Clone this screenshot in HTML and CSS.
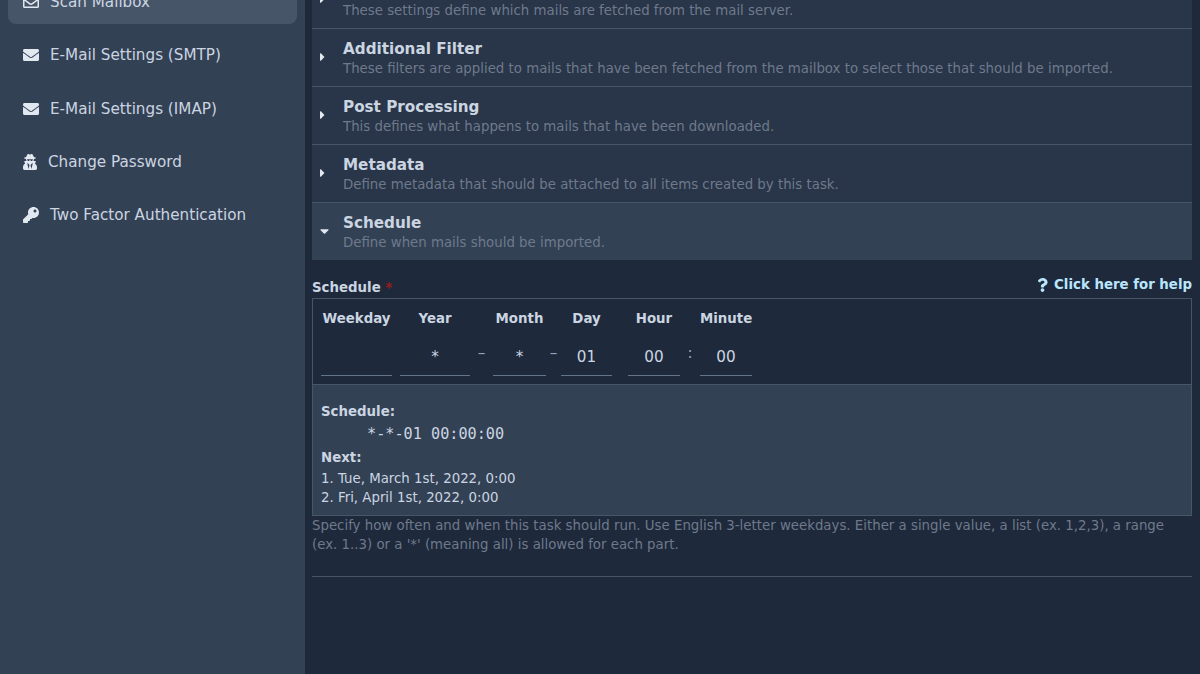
FILE: index.html
```html
<!DOCTYPE html>
<html lang="en">

<head>
    <meta charset="UTF-8">
    <meta name="viewport" content="width=device-width, initial-scale=1.0">
    <title>Scan Mailbox</title>
    <link rel="stylesheet" href="styles.css">
</head>

<body>
    <div class="page">
        <aside class="sidebar">
            <a class="nav-item active">
                <svg class="nav-icon" viewBox="0 0 512 512"><path d="M464 64H48C21.49 64 0 85.49 0 112v288c0 26.51 21.49 48 48 48h416c26.51 0 48-21.49 48-48V112c0-26.51-21.49-48-48-48zm0 48v40.805c-22.422 18.259-58.168 46.651-134.587 106.49-16.841 13.247-50.201 45.072-73.413 44.701-23.208.375-56.579-31.459-73.413-44.701C106.18 199.465 70.425 171.067 48 152.805V112h416zM48 400V214.398c22.914 18.251 55.409 43.862 104.938 82.646 21.857 17.205 60.134 55.186 103.062 54.955 42.717.231 80.509-37.199 103.053-54.947 49.528-38.783 82.032-64.401 104.947-82.653V400H48z"/></svg>
                <span>Scan Mailbox</span>
            </a>
            <a class="nav-item">
                <svg class="nav-icon" viewBox="0 0 512 512"><path d="M502.3 190.8c3.9-3.1 9.7-.2 9.7 4.7V400c0 26.5-21.5 48-48 48H48c-26.5 0-48-21.5-48-48V195.6c0-5 5.7-7.8 9.7-4.7 22.4 17.4 52.1 39.5 154.1 113.6 21.1 15.4 56.7 47.8 92.2 47.6 35.7.3 72-32.8 92.3-47.6 102-74.1 131.6-96.3 154-113.7zM256 320c23.2.4 56.6-29.2 73.4-41.4 132.7-96.3 142.8-104.7 173.4-128.7 5.8-4.5 9.2-11.5 9.2-18.9v-19c0-26.5-21.5-48-48-48H48C21.5 64 0 85.5 0 112v19c0 7.4 3.4 14.3 9.2 18.9 30.6 23.9 40.7 32.4 173.4 128.7 16.8 12.2 50.2 41.8 73.4 41.4z"/></svg>
                <span>E-Mail Settings (SMTP)</span>
            </a>
            <a class="nav-item">
                <svg class="nav-icon" viewBox="0 0 512 512"><path d="M502.3 190.8c3.9-3.1 9.7-.2 9.7 4.7V400c0 26.5-21.5 48-48 48H48c-26.5 0-48-21.5-48-48V195.6c0-5 5.7-7.8 9.7-4.7 22.4 17.4 52.1 39.5 154.1 113.6 21.1 15.4 56.7 47.8 92.2 47.6 35.7.3 72-32.8 92.3-47.6 102-74.1 131.6-96.3 154-113.7zM256 320c23.2.4 56.6-29.2 73.4-41.4 132.7-96.3 142.8-104.7 173.4-128.7 5.8-4.5 9.2-11.5 9.2-18.9v-19c0-26.5-21.5-48-48-48H48C21.5 64 0 85.5 0 112v19c0 7.4 3.4 14.3 9.2 18.9 30.6 23.9 40.7 32.4 173.4 128.7 16.8 12.2 50.2 41.8 73.4 41.4z"/></svg>
                <span>E-Mail Settings (IMAP)</span>
            </a>
            <a class="nav-item">
                <svg class="nav-icon narrow" viewBox="0 0 448 512"><path d="M383.9 308.3l23.9-62.6c4-10.5-3.7-21.7-15-21.7h-58.5c11-18.9 17.8-40.6 17.8-64v-.3c39.2-7.8 64-19.1 64-31.7 0-13.3-27.3-25.1-70.1-33-9.2-32.8-27-65.8-40.6-82.8-9.5-11.9-25.9-15.6-39.5-8.8l-27.6 13.8c-9 4.5-19.6 4.5-28.6 0L182.1 3.4c-13.6-6.8-30-3.1-39.5 8.8-13.5 17-31.4 50-40.6 82.8-42.7 7.9-70 19.7-70 33 0 12.6 24.8 23.9 64 31.7v.3c0 23.4 6.8 45.1 17.8 64H56.3c-11.5 0-19.2 11.7-14.7 22.3l25.8 60.2C27.3 329.8 0 372.7 0 422.4v44.8C0 491.9 20.1 512 44.8 512h358.4c24.7 0 44.8-20.1 44.8-44.8v-44.8c0-48.4-25.8-90.4-64.1-114.1zM176 480l-41.6-192 49.6 32 24 40-32 120zm96 0l-32-120 24-40 49.6-32L272 480zm41.7-298.5c-3.9 11.9-7 24.6-16.5 33.4-10.1 9.3-48 22.4-64-25-2.8-8.4-15.4-8.4-18.3 0-17 50.2-56 32.4-64 25-9.5-8.8-12.7-21.5-16.5-33.4-.8-2.5-6.3-5.7-6.3-5.8v-10.8c28.3 3.6 61 5.8 96 5.8s67.7-2.1 96-5.8v10.8c-.1.1-5.6 3.2-6.4 5.8z"/></svg>
                <span>Change Password</span>
            </a>
            <a class="nav-item">
                <svg class="nav-icon" viewBox="0 0 512 512"><path d="M512 176.001C512 273.203 433.202 352 336 352c-11.22 0-22.19-1.062-32.827-3.069l-24.012 27.014A23.999 23.999 0 0 1 261.223 384H224v40c0 13.255-10.745 24-24 24h-40v40c0 13.255-10.745 24-24 24H24c-13.255 0-24-10.745-24-24v-78.059c0-6.365 2.529-12.47 7.029-16.971l161.802-161.802C163.108 213.814 160 195.271 160 176 160 78.798 238.797.001 335.999 0 433.488-.001 512 78.511 512 176.001zM336 128c0 26.51 21.49 48 48 48s48-21.49 48-48-21.49-48-48-48-48 21.49-48 48z"/></svg>
                <span>Two Factor Authentication</span>
            </a>
        </aside>

        <main class="content">
            <div class="section">
                <svg class="caret" viewBox="0 0 192 512"><path d="M0 384.662V127.338c0-17.818 21.543-26.741 34.142-14.142l128.662 128.662c7.81 7.81 7.81 20.474 0 28.284L34.142 398.804C21.543 411.404 0 402.48 0 384.662z"/></svg>
                <div class="section-text">
                    <h3>Mailbox</h3>
                    <p>These settings define which mails are fetched from the mail server.</p>
                </div>
            </div>
            <div class="section">
                <svg class="caret" viewBox="0 0 192 512"><path d="M0 384.662V127.338c0-17.818 21.543-26.741 34.142-14.142l128.662 128.662c7.81 7.81 7.81 20.474 0 28.284L34.142 398.804C21.543 411.404 0 402.48 0 384.662z"/></svg>
                <div class="section-text">
                    <h3>Additional Filter</h3>
                    <p>These filters are applied to mails that have been fetched from the mailbox to select those that should be imported.</p>
                </div>
            </div>
            <div class="section">
                <svg class="caret" viewBox="0 0 192 512"><path d="M0 384.662V127.338c0-17.818 21.543-26.741 34.142-14.142l128.662 128.662c7.81 7.81 7.81 20.474 0 28.284L34.142 398.804C21.543 411.404 0 402.48 0 384.662z"/></svg>
                <div class="section-text">
                    <h3>Post Processing</h3>
                    <p>This defines what happens to mails that have been downloaded.</p>
                </div>
            </div>
            <div class="section">
                <svg class="caret" viewBox="0 0 192 512"><path d="M0 384.662V127.338c0-17.818 21.543-26.741 34.142-14.142l128.662 128.662c7.81 7.81 7.81 20.474 0 28.284L34.142 398.804C21.543 411.404 0 402.48 0 384.662z"/></svg>
                <div class="section-text">
                    <h3>Metadata</h3>
                    <p>Define metadata that should be attached to all items created by this task.</p>
                </div>
            </div>
            <div class="section open">
                <svg class="caret down" viewBox="0 0 320 512"><path d="M31.3 192h257.3c17.8 0 26.7 21.5 14.1 34.1L174.1 354.8c-7.8 7.8-20.5 7.8-28.3 0L17.2 226.1C4.6 213.5 13.5 192 31.3 192z"/></svg>
                <div class="section-text">
                    <h3>Schedule</h3>
                    <p>Define when mails should be imported.</p>
                </div>
            </div>

            <div class="field-head">
                <label>Schedule <span class="required">*</span></label>
                <a class="help-link">
                    <svg class="help-icon" viewBox="0 0 384 512"><path d="M202.021 0C122.202 0 70.503 32.703 29.914 91.026c-7.363 10.58-5.093 25.086 5.178 32.874l43.138 32.709c10.373 7.865 25.132 6.026 33.253-4.148 25.049-31.381 43.63-49.449 82.757-49.449 30.764 0 68.816 19.799 68.816 49.631 0 22.552-18.617 34.134-48.993 51.164-35.423 19.86-82.299 44.576-82.299 106.405V320c0 13.255 10.745 24 24 24h72.471c13.255 0 24-10.745 24-24v-5.773c0-42.86 125.268-44.645 125.268-160.627C377.504 66.256 286.902 0 202.021 0zM192 373.459c-38.196 0-69.271 31.075-69.271 69.271 0 38.195 31.075 69.27 69.271 69.27s69.271-31.075 69.271-69.271-31.075-69.27-69.271-69.27z"/></svg>
                    <span>Click here for help</span>
                </a>
            </div>

            <div class="calendar">
                <div class="calendar-grid">
                    <b>Weekday</b><i></i><b>Year</b><i></i><b>Month</b><i></i><b>Day</b><i></i><b>Hour</b><i></i><b>Minute</b>
                    <input type="text" value=""><span class="sep"></span>
                    <input type="text" value="*"><span class="sep">–</span>
                    <input type="text" value="*"><span class="sep">–</span>
                    <input type="text" value="01"><span class="sep"></span>
                    <input type="text" value="00"><span class="sep">:</span>
                    <input type="text" value="00">
                </div>
                <div class="preview">
                    <h4>Schedule:</h4>
                    <pre>*-*-01 00:00:00</pre>
                    <h4>Next:</h4>
                    <ul>
                        <li>1. Tue, March 1st, 2022, 0:00</li>
                        <li>2. Fri, April 1st, 2022, 0:00</li>
                    </ul>
                </div>
            </div>
            <p class="hint">Specify how often and when this task should run. Use English 3-letter weekdays. Either a single value, a list (ex. 1,2,3), a range (ex. 1..3) or a '*' (meaning all) is allowed for each part.</p>
            <hr class="divider">
        </main>
    </div>
</body>

</html>
```

FILE: styles.css
```css
* {
    box-sizing: border-box;
}

body {
    font-family: "DejaVu Sans", sans-serif;
    font-size: 15.2px;
    background-color: #1e293b;
    color: #e2e8f0;
    margin: 0;
    height: 100vh;
    overflow: hidden;
}

.page {
    display: flex;
    height: 100%;
}

.sidebar {
    width: 305px;
    flex-shrink: 0;
    background-color: #334155;
    padding: 0 8px;
    overflow: hidden;
}

.nav-item {
    display: flex;
    align-items: center;
    height: 50px;
    margin-bottom: 3.33px;
    padding: 6px 0 0 15px;
    font-size: 15.2px;
    color: #cbd5e1;
    border-radius: 8px;
}

.nav-item:first-child {
    margin-top: -26px;
}

.nav-item.active {
    background-color: #475569;
}

.nav-icon {
    width: 16px;
    height: 16px;
    margin-right: 11px;
    fill: #e2e8f0;
}

.nav-icon.narrow {
    width: 14px;
    margin-right: 11px;
}

.content {
    flex: 1;
    padding: 0 8px 0 7px;
    min-width: 0;
}

.section {
    display: flex;
    align-items: center;
    height: 58px;
    padding-left: 8px;
    background-color: #293548;
    border-bottom: 1px solid #475569;
}

.section:first-child {
    margin-top: -29px;
}

.section.open {
    height: 57px;
    background-color: #334155;
    border-bottom: 0;
}

.caret {
    width: 5px;
    height: 14px;
    margin: 0 18px 2px 0;
    fill: #e2e8f0;
}

.caret.down {
    width: 9px;
    margin: 0 14px 1px 0;
}

.section-text {
    padding-top: 3px;
}

.section h3 {
    margin: 0;
    font-size: 15.2px;
    line-height: 20px;
    font-weight: bold;
    color: #cbd5e1;
}

.section p {
    margin: 0;
    font-size: 13.34px;
    line-height: 20px;
    color: #6e7a8c;
}

.field-head {
    display: flex;
    justify-content: space-between;
    align-items: flex-start;
    height: 38px;
    padding-top: 14px;
}

.field-head label {
    font-size: 13.34px;
    font-weight: bold;
    line-height: 27px;
    color: #cbd5e1;
}

.required {
    color: #991b1b;
}

.help-link {
    display: flex;
    align-items: center;
    font-size: 13.34px;
    font-weight: bold;
    line-height: 22px;
    color: #bae6fd;
}

.help-icon {
    width: 11px;
    height: 14px;
    margin-right: 6px;
    fill: #bae6fd;
}

.calendar {
    border: 1px solid #475569;
}

.calendar-grid {
    display: grid;
    grid-template-columns: 71px 8px 70px 23px 53px 15px 51px 16px 52px 20px 52px;
    grid-template-rows: 38px 47px;
    padding-left: 8px;
    align-items: center;
    color: #cbd5e1;
}

.calendar-grid b {
    font-size: 13.34px;
    text-align: center;
    color: #cbd5e1;
}

.calendar-grid input {
    width: 100%;
    height: 39px;
    padding: 2px 0 0;
    background: transparent;
    border: 0;
    border-bottom: 1px solid #64748b;
    text-align: center;
    font-family: inherit;
    font-size: 15.2px;
    color: #cbd5e1;
    align-self: start;
}

.sep {
    text-align: center;
    font-size: 15.2px;
    align-self: start;
    padding-top: 7px;
    color: #94a3b8;
}

.preview {
    background-color: #334155;
    border-top: 1px solid #475569;
    padding: 19px 8px 8px;
    color: #cbd5e1;
}

.preview h4 {
    margin: 0;
    font-size: 13.34px;
    line-height: 16px;
    font-weight: bold;
}

.preview pre {
    margin: 4px 0 6px 46px;
    font-family: "DejaVu Sans Mono", monospace;
    font-size: 15.2px;
    line-height: 20px;
}

.preview ul {
    list-style: none;
    margin: 3px 0 0;
    padding: 0;
}

.preview li {
    font-size: 13.34px;
    line-height: 19px;
}

.hint {
    margin: 0;
    padding-right: 6px;
    font-size: 13.34px;
    line-height: 19px;
    color: #6e7a8c;
}

.divider {
    margin: 22px 0 0;
    border: 0;
    border-top: 1px solid #475569;
}
```
